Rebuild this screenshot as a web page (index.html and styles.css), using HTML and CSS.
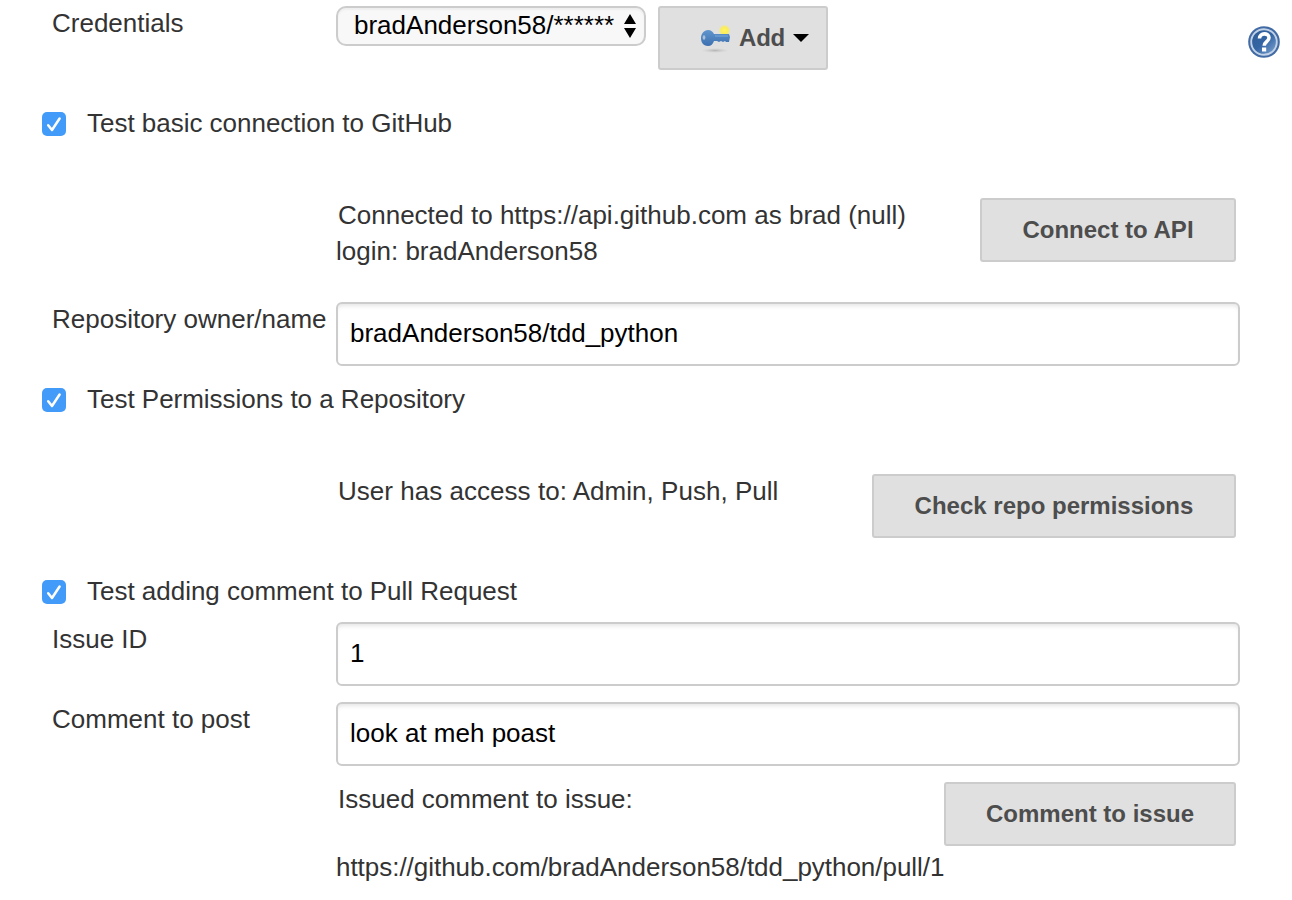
FILE: index.html
```html
<!DOCTYPE html>
<html lang="en">
<head>
<meta charset="utf-8">
<title>GitHub Pull Request Builder</title>
<link rel="stylesheet" href="styles.css">
</head>
<body>
<main class="form">
  <section class="row credentials">
    <label class="label">Credentials</label>
    <div class="controls">
      <button class="select" type="button"><span class="select-text">bradAnderson58/******</span>
        <svg class="arrows" width="12" height="24" viewBox="0 0 12 24"><path d="M6 0l6 10H0zM0 14h12L6 24z"/></svg>
      </button>
      <button class="button add" type="button">
        <svg class="key" width="32" height="32" viewBox="0 0 32 32">
          <defs>
            <linearGradient id="blue" x2="0" y2="1"><stop stop-color="#6095cf"/><stop offset="1" stop-color="#3d70af"/></linearGradient>
            <radialGradient id="glow"><stop stop-color="#fff36b"/><stop offset=".55" stop-color="#fcee55"/><stop offset="1" stop-color="#fcee55" stop-opacity="0"/></radialGradient>
            <radialGradient id="shade"><stop stop-color="#b4b4b4"/><stop offset="1" stop-color="#ccc" stop-opacity="0"/></radialGradient>
          </defs>
          <ellipse cx="15" cy="28.500" rx="14" ry="2.500" fill="url(#shade)"/>
          <circle cx="24.500" cy="8.500" r="6" fill="url(#glow)"/>
          <g class="key-shape">
            <path d="M8 8c3 0 5 2 6 4h15l1 3-1 5h-3l-1-1-2 1-2-1-2 1-2-1h-3c-1 3-3 5-6 5-5 0-7-4-7-8s3-8 7-8z" fill="url(#blue)"/>
            <path d="M15 14h13" stroke="#6c9cd3" stroke-width="1.500"/>
            <ellipse cx="4" cy="15.500" rx="1.400" ry="2.300" fill="#a8bfd9"/>
          </g>
        </svg>
        <span>Add</span>
        <svg class="caret" width="16" height="8" viewBox="0 0 16 8"><path d="M0 0h16L8 8z"/></svg>
      </button>
    </div>
    <svg class="help" width="32" height="32" viewBox="0 0 32 32">
      <defs><linearGradient id="orb" x2="1" y2="1"><stop stop-color="#2f5c95"/><stop offset=".5" stop-color="#3465a4"/><stop offset="1" stop-color="#83a9d6"/></linearGradient></defs>
      <circle cx="16" cy="16" r="15.800" fill="#426ba5"/>
      <circle cx="16" cy="16" r="12.800" fill="url(#orb)" stroke="#c3d3e7" stroke-width="1.900"/>
      <path d="M11.500 12.500c0-6 9.500-6 9.500-.8 0 3.800-4.800 4-4.800 8" fill="none" stroke="#fff" stroke-width="3.600"/>
      <rect x="14" y="21.500" width="4.200" height="4" fill="#fff"/>
    </svg>
  </section>

  <label class="check-row spaced"><span class="checkbox"><svg width="24" height="24" viewBox="0 0 24 24"><path d="M6.200 13.200l3.800 4.800 7.600-11.500"/></svg></span><span class="check-text">Test basic connection to GitHub</span></label>

  <section class="row result first">
    <p class="message"><span class="indent">Connected to https://api.github.com as brad (null)</span><br>login: bradAnderson58</p>
    <button class="button connect" type="button">Connect to API</button>
  </section>

  <section class="row field">
    <label class="label" for="repo">Repository owner/name</label>
    <input class="input" id="repo" value="bradAnderson58/tdd_python">
  </section>

  <label class="check-row spaced"><span class="checkbox"><svg width="24" height="24" viewBox="0 0 24 24"><path d="M6.200 13.200l3.800 4.800 7.600-11.500"/></svg></span><span class="check-text">Test Permissions to a Repository</span></label>

  <section class="row result second">
    <p class="message"><span class="indent access">User has access to: Admin, Push, Pull</span></p>
    <button class="button permissions" type="button">Check repo permissions</button>
  </section>

  <label class="check-row"><span class="checkbox"><svg width="24" height="24" viewBox="0 0 24 24"><path d="M6.200 13.200l3.800 4.800 7.600-11.500"/></svg></span><span class="check-text">Test adding comment to Pull Request</span></label>

  <section class="row field">
    <label class="label" for="issue">Issue ID</label>
    <input class="input" id="issue" value="1">
  </section>
  <section class="row field">
    <label class="label" for="comment">Comment to post</label>
    <input class="input" id="comment" value="look at meh poast">
  </section>
  <section class="row result last">
    <div class="message"><p class="indent">Issued comment to issue:</p><p class="url">https://github.com/bradAnderson58/tdd_python/pull/1</p></div>
    <button class="button comment" type="button">Comment to issue</button>
  </section>
</main>
</body>
</html>
```
FILE: styles.css
```css
* { box-sizing: border-box; }
body { margin: 0; background: #fff; color: #333; overflow: hidden; }
body, button, input { font-family: "Liberation Sans", Arial, sans-serif; font-size: 26px; }
p { margin: 0; }
svg { display: block; flex: none; }
.form { width: 1292px; height: 900px; line-height: 36px; white-space: nowrap; overflow: hidden; }
.row { display: grid; grid-template-columns: 284px 904px; padding-left: 52px; align-items: start; }
.label { margin-top: -1px; }
.credentials { grid-template-columns: 284px 912px 32px; height: 106px; padding-top: 6px; }
.controls { display: flex; gap: 12px; align-items: flex-start; }
.select { display: flex; align-items: center; justify-content: space-between; width: 310px; height: 40px; padding: 0 8px 0 16px; border: 2px solid #ccc; border-radius: 10px; background: #f8f8f8; box-shadow: inset 0 2px 2px #eee; color: #000; }
.select-text { margin-top: -2px; }
.button { height: 64px; padding: 0; border: 2px solid #ccc; border-radius: 3px; background: #e0e0e0; color: #4d4d4d; font-size: 24px; font-weight: bold; text-align: center; }
.add { display: flex; align-items: center; width: 170px; padding-left: 40px; }
.add span { margin-left: 7px; letter-spacing: -0.2px; }
.key-shape { filter: blur(0.5px); }
.caret { margin-left: 8px; }
.help { margin-top: 20px; }
.check-row { display: flex; align-items: center; height: 36px; margin: 0 0 12px 42px; }
.check-row.spaced { margin-bottom: 56px; }
.check-text { margin-top: -2px; letter-spacing: -0.02px; }
.checkbox { width: 24px; height: 24px; margin-right: 21px; border-radius: 5px; background: #429bf9; }
.checkbox path { fill: none; stroke: #fff; stroke-width: 2.5; stroke-linecap: round; stroke-linejoin: round; }
.result { display: flex; justify-content: space-between; padding: 0 56px 0 336px; }
.message { margin-top: -1px; }
.first { height: 104px; }
.second { height: 100px; }
.last { height: 118px; }
.indent { margin-left: 2px; }
.access { letter-spacing: 0.03px; }
.url { margin-top: 32px; letter-spacing: -0.03px; }
.connect { width: 256px; }
.permissions { width: 364px; }
.comment { width: 292px; }
.last .message { width: 0; }
.field { height: 80px; }
.input { width: 904px; height: 64px; padding: 0 12px 2px; border: 2px solid #ccc; border-radius: 6px; background: #fff; box-shadow: inset 0 4px 4px -2px #e6e6e6; color: #000; outline: 0; }
```
